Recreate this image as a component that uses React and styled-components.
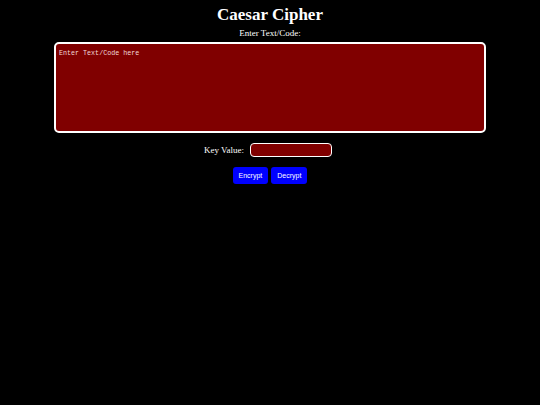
import { useState } from "react";
import styled, { createGlobalStyle } from "styled-components";

const GlobalStyle = createGlobalStyle`
    html, body {
        margin: 0;
        padding: 0;
        background-color: #000000;
    }
    body {
        font-family: "Liberation Serif", "Times New Roman", serif;
        color: #FFFFFF;
        min-height: 405px;
    }
`

function shift(text, key) {
    const k = ((key % 26) + 26) % 26;
    return text.replace(/[a-z]/gi, (c) => {
        const base = c === c.toUpperCase() ? 65 : 97;
        return String.fromCharCode(((c.charCodeAt(0) - base + k) % 26) + base);
    });
}

export default function App() {
    const [text, setText] = useState("");
    const [key, setKey] = useState("");

    const run = (dir) => {
        const k = parseInt(key, 10) || 0;
        setText(shift(text, dir * k));
    }

    return (
        <>
            <GlobalStyle />
            <Main>
                <Title>Caesar Cipher</Title>
                <Label htmlFor="code" top={3}>Enter Text/Code:</Label>
                <CodeArea
                    id="code"
                    placeholder="Enter Text/Code here"
                    value={text}
                    onChange={(e) => setText(e.target.value)}
                />
                <KeyRow>
                    <Label htmlFor="key">Key Value:</Label>
                    <KeyInput
                        id="key"
                        value={key}
                        onChange={(e) => setKey(e.target.value)}
                    />
                </KeyRow>
                <Buttons>
                    <Button onClick={() => run(1)}>Encrypt</Button>
                    <Button onClick={() => run(-1)}>Decrypt</Button>
                </Buttons>
            </Main>
        </>
    );
}

const Main = styled.main`
    display: flex;
    flex-direction: column;
    align-items: center;
    padding-top: 5px;
`
const Title = styled.h1`
    margin: 0;
    font-size: 17px;
    line-height: 20px;
    font-weight: bold;
`
const Label = styled.label`
    margin-top: ${props => props.top || 0}px;
    font-size: 9px;
    line-height: 11px;
`
const CodeArea = styled.textarea`
    box-sizing: border-box;
    margin-top: 3px;
    width: 432px;
    height: 91px;
    padding: 5px 3px 3px 3px;
    border: 2px solid #FFFFFF;
    border-radius: 5px;
    background-color: #800000;
    color: #FFFFFF;
    font-family: "Liberation Mono", "DejaVu Sans Mono", monospace;
    font-size: 6.7px;
    resize: none;
    outline: none;
    &::placeholder{
        color: #f0d8d8;
    }
`
const KeyRow = styled.div`
    display: flex;
    align-items: center;
    gap: 6px;
    margin-top: 10px;
    margin-left: -4px;
`
const KeyInput = styled.input`
    box-sizing: border-box;
    width: 82px;
    height: 14px;
    border: 1.5px solid #FFFFFF;
    border-radius: 4px;
    background-color: #800000;
    color: #FFFFFF;
    font-size: 8px;
    outline: none;
`
const Buttons = styled.div`
    display: flex;
    gap: 3px;
    margin-top: 10px;
`
const Button = styled.button`
    box-sizing: border-box;
    height: 17px;
    padding: 0 6px;
    border: none;
    border-radius: 3px;
    background-color: #0000FF;
    color: #FFFFFF;
    font-family: "Liberation Sans", Arial, sans-serif;
    font-size: 7px;
    cursor: pointer;
`
